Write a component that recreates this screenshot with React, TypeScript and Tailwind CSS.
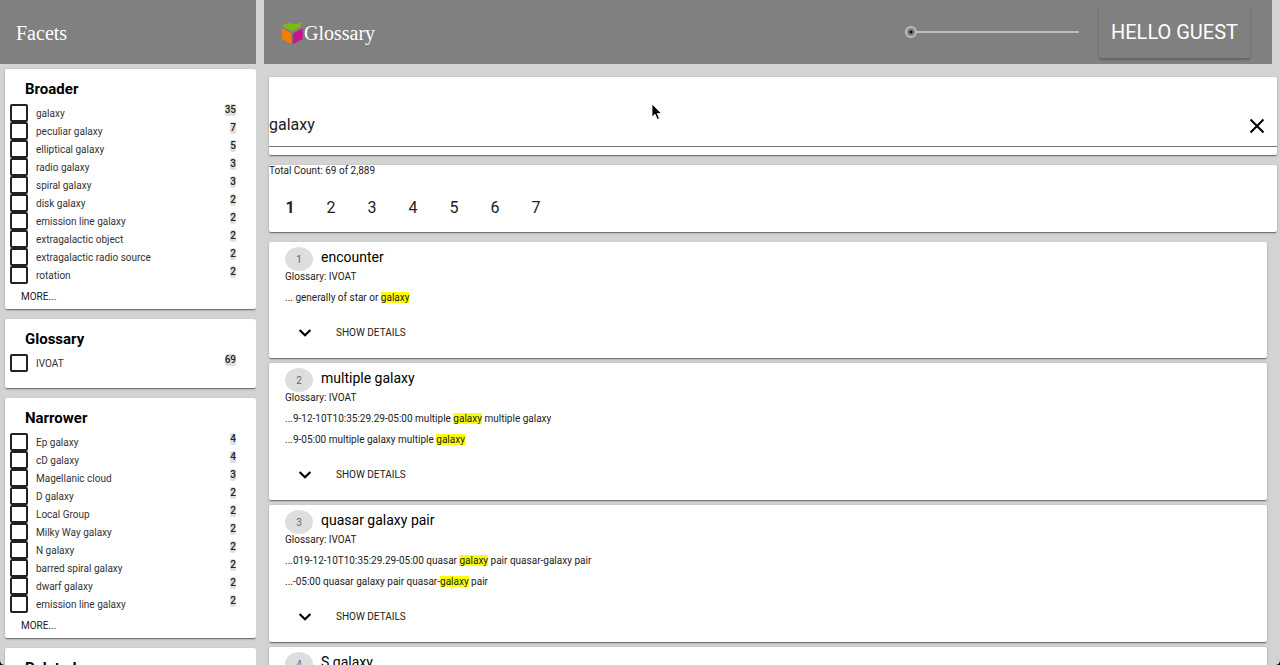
import React, { useState } from "react";

type Facet = { title: string; items: [string, number][]; more: boolean };

const FACETS: Facet[] = [
  {
    title: "Broader",
    more: true,
    items: [
      ["galaxy", 35],
      ["peculiar galaxy", 7],
      ["elliptical galaxy", 5],
      ["radio galaxy", 3],
      ["spiral galaxy", 3],
      ["disk galaxy", 2],
      ["emission line galaxy", 2],
      ["extragalactic object", 2],
      ["extragalactic radio source", 2],
      ["rotation", 2],
    ],
  },
  { title: "Glossary", more: false, items: [["IVOAT", 69]] },
  {
    title: "Narrower",
    more: true,
    items: [
      ["Ep galaxy", 4],
      ["cD galaxy", 4],
      ["Magellanic cloud", 3],
      ["D galaxy", 2],
      ["Local Group", 2],
      ["Milky Way galaxy", 2],
      ["N galaxy", 2],
      ["barred spiral galaxy", 2],
      ["dwarf galaxy", 2],
      ["emission line galaxy", 2],
    ],
  },
  { title: "Related", more: false, items: [] },
];

type Result = { title: string; snippets: [string, string, string][] };

const RESULTS: Result[] = [
  { title: "encounter", snippets: [["... generally of star or ", "galaxy", ""]] },
  {
    title: "multiple galaxy",
    snippets: [
      ["...9-12-10T10:35:29.29-05:00 multiple ", "galaxy", " multiple galaxy"],
      ["...9-05:00 multiple galaxy multiple ", "galaxy", ""],
    ],
  },
  {
    title: "quasar galaxy pair",
    snippets: [
      ["...019-12-10T10:35:29.29-05:00 quasar ", "galaxy", " pair quasar-galaxy pair"],
      ["...-05:00 quasar galaxy pair quasar-", "galaxy", " pair"],
    ],
  },
  { title: "S galaxy", snippets: [] },
];

const CARD =
  "rounded-[2px] bg-white shadow-[0_1px_3px_rgba(0,0,0,0.2),0_1px_1px_rgba(0,0,0,0.14),0_2px_1px_-1px_rgba(0,0,0,0.3)]";

function FacetCard({ facet }: { facet: Facet }) {
  return (
    <section className={`${CARD} shrink-0 pt-2.5`}>
      <h2 className="pl-5 text-[15px] leading-5 font-bold text-black">{facet.title}</h2>
      <ul className="pt-[5px]">
        {facet.items.map(([name, count]) => {
          const id = `${facet.title}-${name}`;
          return (
            <li key={name} className="flex h-[18px] items-center pr-5 pl-[5px]">
              <input
                id={id}
                type="checkbox"
                className="size-[18px] shrink-0 appearance-none rounded-[2px] border-2 border-[#212121] checked:bg-[#212121]"
              />
              <label htmlFor={id} className="flex-1 pt-px pl-2 text-[10px] leading-[18px] text-[#333]">
                {name}
              </label>
              <span className="mb-1.5 rounded-[2px] bg-[#dfdfdf] text-[10px] leading-3 font-medium text-[#222]">
                {count}
              </span>
            </li>
          );
        })}
      </ul>
      {facet.more ? (
        <button type="button" className="block h-[25px] pl-4 text-[10px] leading-[25px] text-[#212121]">
          MORE...
        </button>
      ) : (
        <div className="h-4" />
      )}
    </section>
  );
}

function ResultCard({ result, index }: { result: Result; index: number }) {
  return (
    <article className={`${CARD} shrink-0 px-4 pt-[5px] pb-[7px] text-[10px] text-[#212121]`}>
      <div className="flex h-6 items-start gap-2">
        <span className="flex h-6 w-7 shrink-0 items-center justify-center rounded-[50%] bg-[#dedede] text-[10px] text-[#666]">
          {index + 1}
        </span>
        <h3 className="text-sm leading-[21px] text-black">{result.title}</h3>
      </div>
      <p className="leading-3">Glossary: IVOAT</p>
      <div className="pt-1">
        {result.snippets.map(([before, hit, after], i) => (
          <p key={i} className="py-1 leading-[13px]">
            {before}
            <mark className="bg-[#ff0] text-[#212121]">{hit}</mark>
            {after}
          </p>
        ))}
      </div>
      <button type="button" className="flex h-[43px] items-center gap-[23px] pt-[5px] pl-3">
        <svg viewBox="0 0 16 16" className="size-4" fill="none" stroke="#000" strokeWidth="2.2">
          <path d="M2.6 6 8 11.2l5.4-5.2" />
        </svg>
        SHOW DETAILS
      </button>
    </article>
  );
}

export default function App() {
  const [query, setQuery] = useState("galaxy");
  return (
    <div className="relative flex h-screen gap-2 overflow-hidden bg-[#d3d3d3] font-['Roboto',sans-serif]">
      <aside className="flex w-64 shrink-0 flex-col overflow-hidden">
        <header className="flex h-16 shrink-0 items-center bg-[#808080] px-4 pt-0.5">
          <h1 className="font-['Liberation_Serif',serif] text-xl text-white">Facets</h1>
        </header>
        <div className="flex flex-col gap-2.5 pt-[5px] pl-[5px]">
          {FACETS.map((f) => (
            <FacetCard key={f.title} facet={f} />
          ))}
        </div>
      </aside>

      <main className="flex min-w-0 flex-1 flex-col">
        <header className="mr-2 flex h-16 shrink-0 items-center bg-[#808080] pr-[22px] pl-4">
          <div className="flex flex-1 items-center pt-0.5">
            <svg viewBox="0 0 24 24" className="size-6">
              <path d="M2 5.200C4.500 3.200 7 2.100 9.500 2.200C12.500 2.400 14 3.300 16.500 3C18.800 2.700 20.300 1.800 21.800.5C21 3 20.600 5.800 18.800 7C16 7.600 14.500 9.500 11.800 9.900Z" fill="#80b90f" />
              <path d="M1.500 7 11 12.300V23L1.500 17.600Z" fill="#f57c00" />
              <path d="M22.800 7.200 12.800 12.600V23.200L22.800 18Z" fill="#c2188b" />
            </svg>
            <h1 className="font-['Liberation_Serif',serif] text-xl text-white">Glossary</h1>
          </div>
          <input
            type="range"
            aria-label="Zoom"
            defaultValue={0}
            className="mr-5 h-3 w-[174px] appearance-none bg-[linear-gradient(#bdbdbd,#bdbdbd)] bg-[length:calc(100%-12px)_2px] bg-right bg-no-repeat [&::-webkit-slider-thumb]:size-3 [&::-webkit-slider-thumb]:appearance-none [&::-webkit-slider-thumb]:rounded-full [&::-webkit-slider-thumb]:border-2 [&::-webkit-slider-thumb]:border-[#bdbdbd] [&::-webkit-slider-thumb]:bg-[radial-gradient(circle,#000_1px,#808080_2px)]"
          />
          <button
            type="button"
            className="h-[52px] rounded-[2px] px-3 text-xl text-white shadow-[0_2px_2px_rgba(0,0,0,0.2),0_0_2px_rgba(0,0,0,0.1)]"
          >
            HELLO GUEST
          </button>
        </header>

        <div className="flex flex-col gap-2.5 pt-[13px] pr-[3px] pl-[5px]">
          <section className={`${CARD} pt-7 pb-2`}>
            <div className="flex h-[42px] items-center border-b border-[#757575] pr-3">
              <input
                type="text"
                aria-label="Search"
                value={query}
                onChange={(e) => setQuery(e.target.value)}
                className="min-w-0 flex-1 bg-transparent pb-0.5 text-base text-[#212121] outline-none"
              />
              <button type="button" aria-label="Clear" onClick={() => setQuery("")}>
                <svg viewBox="0 0 16 16" className="size-4" fill="none" stroke="#000" strokeWidth="2">
                  <path d="M1.500 1.500l13 13M14.500 1.500l-13 13" />
                </svg>
              </button>
            </div>
          </section>

          <section className={`${CARD} pb-[7px] text-[#212121]`}>
            <p className="text-[10px] leading-3">Total Count: 69 of 2,889</p>
            <nav className="flex h-12 items-center gap-[1px] pt-[13px] pl-px">
              {[1, 2, 3, 4, 5, 6, 7].map((n) => (
                <button
                  key={n}
                  type="button"
                  className={n === 1 ? "h-8 w-10 text-base font-bold" : "h-8 w-10 text-base"}
                >
                  {n}
                </button>
              ))}
            </nav>
          </section>

          <div className="flex flex-col gap-[5px] pr-2.5">
            {RESULTS.map((r, i) => (
              <ResultCard key={r.title} result={r} index={i} />
            ))}
          </div>
        </div>
      </main>

      <svg viewBox="0 0 12 18" className="absolute top-[103px] left-[651px] h-[18px] w-3">
        <path d="M1 1v13l3-2.800 2.300 5.200 2.200-1L6.200 10.500H10.500Z" fill="#000" stroke="#fff" strokeWidth="0.800" />
      </svg>
      <svg viewBox="0 0 5 5" className="absolute bottom-0 left-0 size-[5px]">
        <path d="M0 0Q0 5 5 5H0Z" />
      </svg>
      <svg viewBox="0 0 5 5" className="absolute right-0 bottom-0 size-[5px]">
        <path d="M5 0Q5 5 0 5H5Z" />
      </svg>
    </div>
  );
}
